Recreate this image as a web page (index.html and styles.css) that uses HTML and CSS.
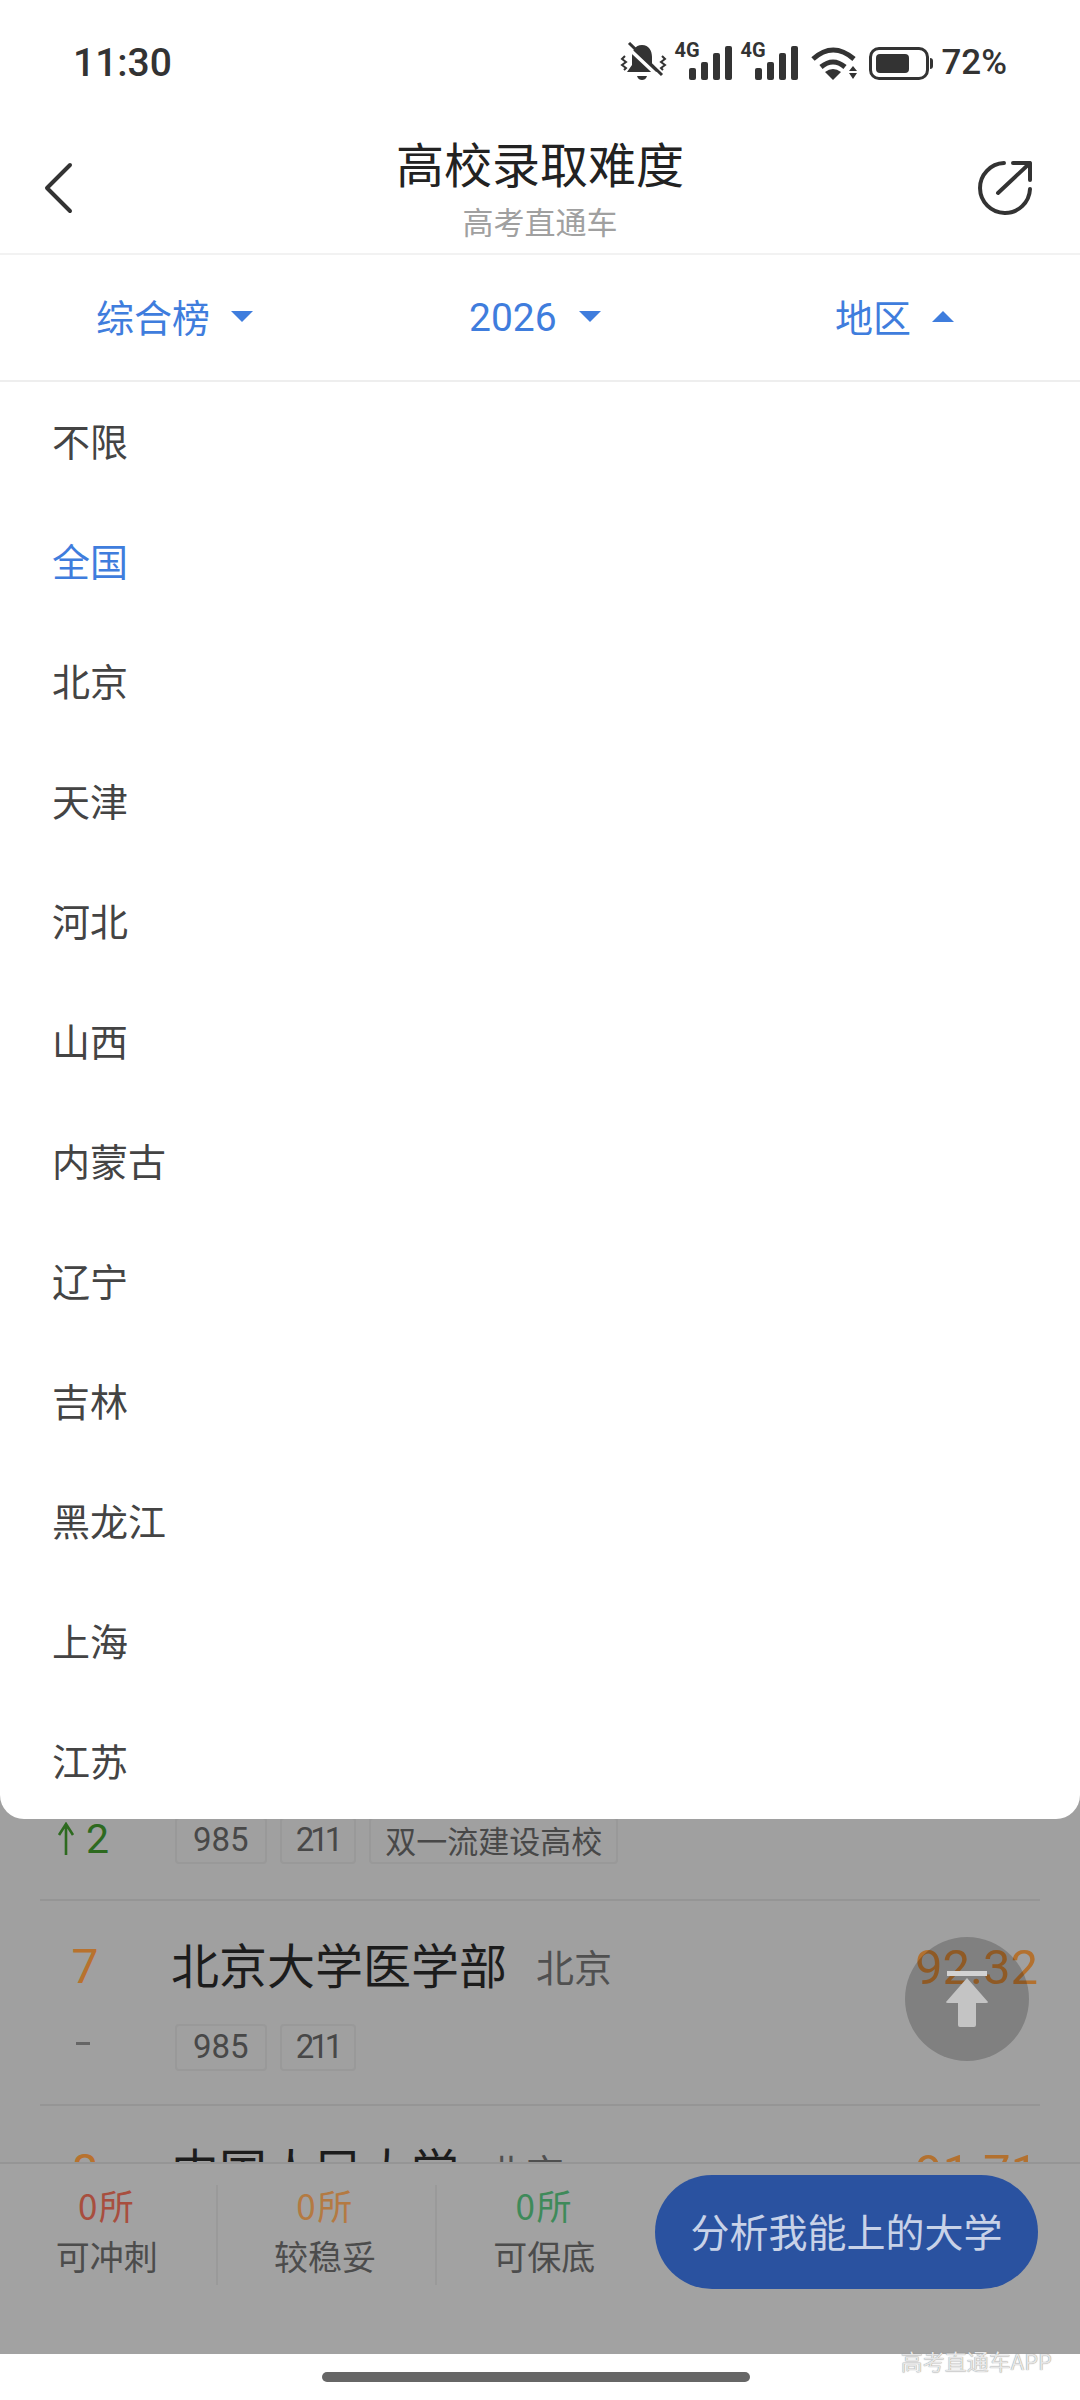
FILE: index.html

```html
<!DOCTYPE html>
<html lang="zh-CN">
<head>
  <meta charset="UTF-8">
  <meta name="viewport" content="width=device-width, initial-scale=1.0">
  <title>高校录取难度</title>
  <link rel="stylesheet" href="styles.css">
</head>
<body>
  <div class="phone">
    <div class="status-bar">
      <span class="clock">11:30</span>
      <div class="status-icons">
        <svg class="ic-bell" width="48" height="40" viewBox="0 0 48 40">
          <path d="M22 3c-7 0-10 6-10 12v8l-5 7h30l-5-7v-8c0-6-3-12-10-12z" fill="#333"/>
          <path d="M17 34h10c-1 3-3 4-5 4s-4-1-5-4z" fill="#333"/>
          <path d="M6 4l33 31" stroke="#fff" stroke-width="3.5"/>
          <path d="M9 1l33 32" stroke="#333" stroke-width="3"/>
          <path d="M5 14l-3 3 4 3-4 3 4 3-2 2M42 14l3 3-4 3 4 3-4 3 2 2" fill="none" stroke="#333" stroke-width="2"/>
        </svg>
        <div class="signal">
          <span class="net">4G</span>
          <span class="bar b1"></span><span class="bar b2"></span><span class="bar b3"></span><span class="bar b4"></span>
        </div>
        <div class="signal">
          <span class="net">4G</span>
          <span class="bar b1"></span><span class="bar b2"></span><span class="bar b3"></span><span class="bar b4"></span>
        </div>
        <svg class="ic-wifi" width="46" height="33" viewBox="0 0 46 33">
          <path d="M2 12Q22 -6 43 12" fill="none" stroke="#333" stroke-width="5"/>
          <path d="M10 20Q22 10 34 20" fill="none" stroke="#333" stroke-width="5"/>
          <path d="M14 25Q22 19 30 25L22 33z" fill="#333"/>
          <path d="M38 24l4-5 4 5zM38 26l4 6 4-6z" fill="#333"/>
        </svg>
        <div class="battery"><div class="battery-level"></div></div>
        <span class="percent">72%</span>
      </div>
    </div>

    <header class="nav">
      <svg class="back" width="32" height="54" viewBox="0 0 32 54">
        <path d="M28 4L5 27l23 23" fill="none" stroke="#333" stroke-width="4" stroke-linecap="round" stroke-linejoin="round"/>
      </svg>
      <div class="nav-title">
        <h1>高校录取难度</h1>
        <p>高考直通车</p>
      </div>
      <svg class="share" width="60" height="60" viewBox="0 0 60 60">
        <path d="M30 5A25 25 0 1 0 56 31" fill="none" stroke="#333" stroke-width="4" stroke-linecap="round"/>
        <path d="M24 35L56 5M39 5h17v17" fill="none" stroke="#333" stroke-width="4" stroke-linecap="round" stroke-linejoin="round"/>
      </svg>
    </header>

    <nav class="tabs">
      <div class="tab t1">综合榜<span class="caret"></span></div>
      <div class="tab t2">2026<span class="caret"></span></div>
      <div class="tab t3">地区<span class="caret up"></span></div>
    </nav>

    <main class="body">
      <div class="list">
        <div class="row row-first">
          <div class="rank-col">
            <span class="trend">
              <svg width="18" height="34" viewBox="0 0 18 34">
                <path d="M9 33V2M2 13L9 2l7 11" fill="none" stroke="#2d6a1f" stroke-width="2.6"/>
              </svg>
              2
            </span>
          </div>
          <div class="row-main">
            <div class="tags">
              <span class="tag">985</span><span class="tag tag-ones">211</span><span class="tag tag-cn">双一流建设高校</span>
            </div>
          </div>
        </div>
        <div class="row">
          <div class="rank-col">
            <span class="rank">7</span>
            <span class="dash"></span>
          </div>
          <div class="row-main">
            <div class="name-line"><span class="name">北京大学医学部</span><span class="area">北京</span></div>
            <div class="tags">
              <span class="tag">985</span><span class="tag tag-ones">211</span>
            </div>
          </div>
          <span class="score">92.32</span>
        </div>
        <div class="row">
          <div class="rank-col">
            <span class="rank">8</span>
          </div>
          <div class="row-main">
            <div class="name-line"><span class="name">中国人民大学</span><span class="area">北京</span></div>
          </div>
          <span class="score">91.71</span>
        </div>
      </div>

      <footer class="bottom">
        <div class="stat"><b class="red">0所</b><span>可冲刺</span></div>
        <div class="stat"><b class="orange">0所</b><span>较稳妥</span></div>
        <div class="stat"><b class="green">0所</b><span>可保底</span></div>
        <div class="analyse">分析我能上的大学</div>
      </footer>

      <div class="to-top">
        <svg width="44" height="56" viewBox="0 0 44 56">
          <path d="M2 2.5h40" stroke="#d2d2d2" stroke-width="5"/>
          <path d="M22 7L43 31q0 1-2 1H31v22q0 2-2 2H15q-2 0-2-2V32H3q-2 0-2-1z" fill="#c4c4c4"/>
        </svg>
      </div>

      <ul class="areas">
        <li>不限</li>
        <li class="on">全国</li>
        <li>北京</li>
        <li>天津</li>
        <li>河北</li>
        <li>山西</li>
        <li>内蒙古</li>
        <li>辽宁</li>
        <li>吉林</li>
        <li>黑龙江</li>
        <li>上海</li>
        <li>江苏</li>
      </ul>
    </main>

    <div class="home-bar"><span class="handle"></span></div>
    <span class="watermark">高考直通车APP</span>
  </div>
</body>
</html>
```

FILE: styles.css

```css
* {
  box-sizing: border-box;
}
html, body {
  margin: 0;
  padding: 0;
}
body {
  background-color: #ffffff;
  font-family: "Noto Sans CJK SC", "Roboto", sans-serif;
}
.phone {
  position: relative;
  width: 1080px;
  height: 2400px;
  display: flex;
  flex-direction: column;
  overflow: hidden;
}

/* status bar */
.status-bar {
  height: 126px;
  padding: 0 73px;
  display: flex;
  align-items: center;
  justify-content: space-between;
  color: #333333;
}
.clock {
  font-family: "Roboto", sans-serif;
  font-size: 39px;
  font-weight: 500;
}
.status-icons {
  display: flex;
  align-items: flex-end;
  height: 46px;
  margin-bottom: 12px;
}
.ic-bell {
  margin: 0 6px -2px 0;
}
.signal {
  position: relative;
  width: 58px;
  height: 46px;
  display: flex;
  align-items: flex-end;
  justify-content: flex-end;
  gap: 5px;
  margin-right: 8px;
}
.net {
  position: absolute;
  left: 0;
  top: 9px;
  font-family: "Roboto", sans-serif;
  font-size: 20px;
  font-weight: 700;
  line-height: 14px;
}
.bar {
  width: 7px;
  background: #333333;
  border-radius: 2px;
}
.b1 { height: 12px; }
.b2 { height: 18px; }
.b3 { height: 27px; }
.b4 { height: 34px; }
.ic-wifi {
  margin: 0 12px 0 5px;
}
.battery {
  position: relative;
  width: 60px;
  height: 33px;
  border: 3px solid #333333;
  border-radius: 10px;
  padding: 4px;
  margin-right: 12px;
}
.battery::after {
  content: "";
  position: absolute;
  right: -7px;
  top: 8px;
  width: 3px;
  height: 11px;
  background: #333333;
  border-radius: 0 3px 3px 0;
}
.battery-level {
  width: 33px;
  height: 100%;
  background: #333333;
  border-radius: 4px;
}
.percent {
  font-family: "Roboto", sans-serif;
  font-size: 35px;
  font-weight: 500;
  line-height: 38px;
  margin-bottom: -2px;
}

/* title bar */
.nav {
  height: 129px;
  padding: 0 46px;
  display: grid;
  grid-template-columns: 1fr auto 1fr;
  align-items: center;
  border-bottom: 2px solid #f2f2f2;
}
.back {
  margin: -4px 0 0 -4px;
}
.share {
  justify-self: end;
  margin-top: -3px;
}
.nav-title {
  text-align: center;
  margin-bottom: 12px;
}
.nav-title h1 {
  margin: 0;
  font-size: 48px;
  font-weight: 400;
  line-height: 66px;
  color: #222222;
}
.nav-title p {
  margin: 8px 0 0;
  font-size: 31px;
  line-height: 36px;
  color: #a0a0a0;
}

/* filter tabs */
.tabs {
  height: 127px;
  position: relative;
  border-bottom: 2px solid #eeeeee;
  color: #3f7ddd;
  font-size: 38px;
}
.tab {
  position: absolute;
  top: 35px;
  display: flex;
  align-items: center;
  line-height: 52px;
}
.t1 { left: 96px; }
.t2 {
  left: 469px;
  top: 37px;
  font-family: "Roboto", sans-serif;
  font-size: 39px;
}
.t2 .caret {
  margin-left: 22px;
  margin-top: -4px;
}
.t3 { left: 835px; }
.caret {
  width: 0;
  height: 0;
  margin-left: 21px;
  border-left: 11px solid transparent;
  border-right: 11px solid transparent;
  border-top: 11px solid #3f7ddd;
}
.caret.up {
  border-top: 0;
  border-bottom: 11px solid #3f7ddd;
}

/* ranking list, dimmed behind the open dropdown */
.body {
  position: relative;
  flex: 1;
  min-height: 0;
  display: flex;
  flex-direction: column;
  background: #a0a0a0;
}
.list {
  flex: 1;
  min-height: 0;
  padding: 0 40px;
  overflow: hidden;
}
.row {
  position: relative;
  height: 205px;
  display: flex;
  border-bottom: 2px solid #959595;
  padding-top: 33px;
}
.row-first {
  height: 1519px;
  padding-top: 1435px;
}
.rank-col {
  width: 132px;
  display: flex;
  flex-direction: column;
  align-items: center;
  flex-shrink: 0;
  padding-right: 42px;
}
.rank {
  font-family: "Roboto", sans-serif;
  font-size: 48px;
  line-height: 66px;
  color: #b8722e;
}
.dash {
  width: 14px;
  height: 3px;
  margin: 42px 4px 0 0;
  background: #666666;
}
.trend {
  display: flex;
  align-items: center;
  gap: 11px;
  padding-right: 4px;
  font-family: "Roboto", sans-serif;
  font-size: 41px;
  line-height: 44px;
  color: #2d6a1f;
  white-space: nowrap;
}
.row-main {
  flex: 1;
}
.name-line {
  display: flex;
  align-items: center;
  height: 66px;
  margin: -4px 0 0 -1px;
}
.name {
  font-size: 48px;
  color: #1c1c1c;
}
.area {
  margin-left: 29px;
  padding-top: 5px;
  font-size: 38px;
  color: #505050;
}
.tags {
  display: flex;
  gap: 13px;
  margin: 28px 0 0 3px;
}
.row-first .tags {
  margin-top: 0;
}
.tag {
  height: 47px;
  padding: 0 16px;
  border: 2px solid #999999;
  border-radius: 4px;
  font-family: "Roboto", sans-serif;
  font-size: 33px;
  line-height: 42px;
  color: #484848;
}
.tag-ones {
  padding: 0 15px 0 14px;
  letter-spacing: -4px;
}
.tag-cn {
  font-family: "Noto Sans CJK SC", sans-serif;
  font-size: 31px;
  padding: 0 14px;
}
.score {
  position: absolute;
  right: 2px;
  top: 34px;
  font-family: "Roboto", sans-serif;
  font-size: 49px;
  line-height: 66px;
  color: #b3712f;
}

/* bottom action bar */
.bottom {
  flex: none;
  height: 192px;
  background: #a2a2a2;
  border-top: 2px solid #959595;
  display: flex;
  padding: 11px 42px 0 0;
}
.stat {
  width: 219px;
  height: 100px;
  margin-top: 10px;
  padding-right: 3px;
  display: flex;
  flex-direction: column;
  align-items: center;
  border-right: 2px solid #9a9a9a;
}
.stat:nth-child(3) {
  border-right: 0;
}
.stat b {
  font-weight: 400;
  font-size: 35px;
  line-height: 40px;
  letter-spacing: 1.5px;
}
.stat span {
  margin-top: 10px;
  font-size: 34px;
  line-height: 42px;
  color: #4c4c4c;
}
.red { color: #a84e3e; }
.orange { color: #b47a42; }
.green { color: #3f8a5a; }
.analyse {
  flex: none;
  width: 383px;
  height: 114px;
  margin-left: auto;
  border-radius: 57px;
  background: #2a52a0;
  color: #c8d2e8;
  font-size: 39px;
  line-height: 110px;
  text-align: center;
}
.to-top {
  position: absolute;
  left: 905px;
  top: 1555px;
  width: 124px;
  height: 124px;
  border-radius: 50%;
  background: rgba(0, 0, 0, 0.2);
  display: flex;
  align-items: center;
  justify-content: center;
}

/* open dropdown */
.areas {
  position: absolute;
  left: 0;
  right: 0;
  top: 0;
  height: 1437px;
  margin: 0;
  padding: 0;
  list-style: none;
  background: #ffffff;
  border-radius: 0 0 24px 24px;
  overflow: hidden;
}
.areas li {
  height: 120px;
  padding-left: 52px;
  font-size: 38px;
  line-height: 115px;
  color: #444444;
}
.areas li.on {
  color: #3f7ddd;
}

/* gesture area */
.home-bar {
  flex: none;
  height: 46px;
  display: flex;
  justify-content: center;
  align-items: flex-start;
  padding: 18px 8px 0 0;
}
.handle {
  width: 428px;
  height: 10px;
  border-radius: 5px;
  background: #666666;
}
.watermark {
  position: absolute;
  right: 28px;
  top: 2343px;
  font-size: 22px;
  line-height: 34px;
  color: #e6e6e6;
  text-shadow: 0 0 1px #777777;
}
```
